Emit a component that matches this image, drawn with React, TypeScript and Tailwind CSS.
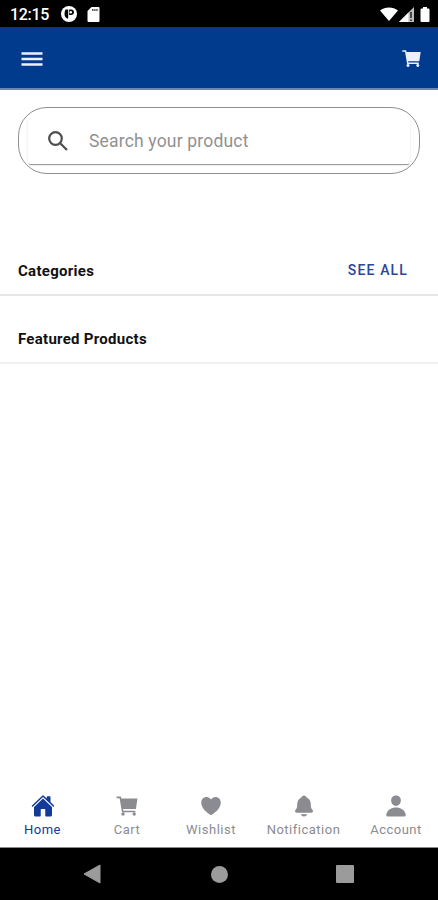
import React from 'react';
import { IoHeart, IoHome, IoNotifications, IoPerson } from 'react-icons/io5';

const CartIcon: React.FC<{ size?: number; className?: string }> = ({ size = 24, className }) => (
  <svg className={className} width={size} height={size} viewBox="0 0 24 24" fill="currentColor">
    <path d="M1.500 2.500h4.300l.6 2H22.500L20.900 15H8.100l.3 1.700H20.300v1.500H7L4.600 4.200H1.500z" />
    <circle cx="8" cy="20" r="1.700" />
    <circle cx="19.200" cy="20" r="1.700" />
  </svg>
);

const tabs = [
  { label: 'Home', icon: IoHome, width: 'w-[85px]', spacing: 'tracking-[0.5px]', active: true },
  { label: 'Cart', icon: CartIcon, width: 'w-[84px]', spacing: 'tracking-[0.5px]', active: false },
  { label: 'Wishlist', icon: IoHeart, width: 'w-[84px]', spacing: 'tracking-[0.5px]', active: false },
  { label: 'Notification', icon: IoNotifications, width: 'w-[101px]', spacing: 'tracking-[0.5px]', active: false },
  { label: 'Account', icon: IoPerson, width: 'w-[84px]', spacing: 'tracking-[0.5px]', active: false },
];

const StatusBar: React.FC = () => (
  <div className="flex h-[27px] shrink-0 items-center bg-black pt-px pl-[10px] pr-2 text-white">
    <span className="w-[51px] pt-px text-[16px] leading-none font-medium tracking-[-0.3px]">12:15</span>
    <svg width="16" height="16" viewBox="0 0 16 16">
      <circle cx="8" cy="8" r="8" fill="#fff" />
      <path d="M4.500 3.500h2.700v9H6.200C4.500 11.500 3.500 10 3.500 8q0-3 1-4.500z" fill="#000" />
      <path d="M8.200 3.500h2a2.700 2.700 0 0 1 0 5.400H8.200z" fill="#000" />
      <circle cx="9.800" cy="6.200" r="1.200" fill="#fff" />
    </svg>
    <svg className="ml-[10px]" width="13" height="15" viewBox="0 0 13 15">
      <path d="M4.500 0H11.500Q12.500 0 12.500 1V14Q12.500 15 11.500 15H1.500Q.5 15 .5 14V4z" fill="#fff" />
      <path d="M5 3h6" stroke="#222" strokeWidth="1.500" strokeDasharray="1.500 .6" />
    </svg>
    <div className="ml-auto flex items-center">
      <svg width="18" height="14" viewBox="0 0 18 14">
        <path d="M0 3.500C5-.6 13-.6 18 3.500L9 14z" fill="#fff" />
      </svg>
      <svg className="ml-px" width="15" height="15" viewBox="0 0 15 15">
        <path d="M15 0v15H0z" fill="#bdbdbd" />
        <path d="M9.500 5.500V15H0z" fill="#fff" />
        <path d="M12 5v6M12 12.500v1.500" stroke="#222" strokeWidth="1.500" />
      </svg>
      <svg className="ml-[6px]" width="10" height="15" viewBox="0 0 10 15">
        <path d="M3 0h4v1.500h1.500q1 0 1 1V14q0 1-1 1h-7q-1 0-1-1V2.500q0-1 1-1H3z" fill="#fff" />
      </svg>
    </div>
  </div>
);

const Header: React.FC = () => (
  <header className="flex h-[63px] shrink-0 items-center justify-between border-b-2 border-[#6f83b5] bg-[#003b8e] pr-4 pl-[21px] text-[#eef0ff]">
    <svg className="mt-0.5" width="22" height="16" viewBox="0 0 22 16">
      <path d="M.5 2.500h21M.5 8h21M.5 13.500h21" stroke="currentColor" strokeWidth="2.500" />
    </svg>
    <CartIcon className="mt-px" size={21} />
  </header>
);

const SearchBar: React.FC = () => (
  <div className="mx-[18px] mt-[17px] h-[67px] overflow-hidden rounded-[29px] border border-[#8f8f8f] px-[9px] pt-[9px]">
    <div className="flex h-[47px] items-center rounded-[2px] pl-[18px] shadow-[0_2px_0_-1px_rgba(0,0,0,0.15),0_2px_1px_-1px_rgba(0,0,0,0.2),0_1px_2px_rgba(0,0,0,0.16)]">
      <svg width="24" height="24" viewBox="0 0 24 24" fill="none" stroke="#4d4d4d" strokeWidth="2.200">
        <circle cx="9.500" cy="9.500" r="6.300" />
        <path d="m14 14 7 7" />
      </svg>
      <span className="mt-[3px] ml-[19px] text-[17.500px] leading-none tracking-[0.180px] text-[#919191]">Search your product</span>
    </div>
  </div>
);

const TabBar: React.FC = () => (
  <nav className="flex h-[62px] shrink-0 border-b border-[#8a8a8a]">
    {tabs.map(({ label, icon: Icon, width, spacing, active }) => (
      <div
        key={label}
        className={`flex flex-col items-center pt-[8px] ${width} ${active ? 'text-[#123b98]' : 'text-[#8b8b92]'}`}
      >
        <Icon size={24} />
        <span className={`mt-1 text-[13px] leading-4 ${spacing}`}>{label}</span>
      </div>
    ))}
  </nav>
);

const SystemBar: React.FC = () => (
  <div className="flex h-[52px] shrink-0 items-center justify-between bg-black pr-[84px] pl-[83px] text-[#9b9b9b]">
    <svg width="18" height="20" viewBox="0 0 18 20">
      <path d="M17 1v18L1 10z" fill="currentColor" stroke="currentColor" strokeLinejoin="round" />
    </svg>
    <div className="ml-px h-[17px] w-[17px] rounded-full bg-[#9b9b9b]" />
    <div className="h-[18px] w-[18px] rounded-[1px] bg-[#9b9b9b]" />
  </div>
);

export default function App() {
  return (
    <div className="flex h-[900px] w-[438px] flex-col overflow-hidden bg-white font-['Roboto',sans-serif]">
      <StatusBar />
      <Header />
      <main className="flex-1">
        <SearchBar />
        <div className="mt-[72px] flex h-[50px] items-center justify-between border-b-2 border-[#e6e6e6] pr-[30px] pl-[18px]">
          <h2 className="mt-0.5 text-[15px] font-bold tracking-[0.280px] text-[#111]">Categories</h2>
          <button className="text-[14px] font-medium tracking-[1.150px] text-[#2b469b]">SEE ALL</button>
        </div>
        <div className="flex h-[68px] items-center border-b-2 border-[#f0f0f0] pt-[21px] pl-[18px]">
          <h2 className="text-[15px] font-bold tracking-[0.280px] text-[#111]">Featured Products</h2>
        </div>
      </main>
      <TabBar />
      <SystemBar />
    </div>
  );
}
